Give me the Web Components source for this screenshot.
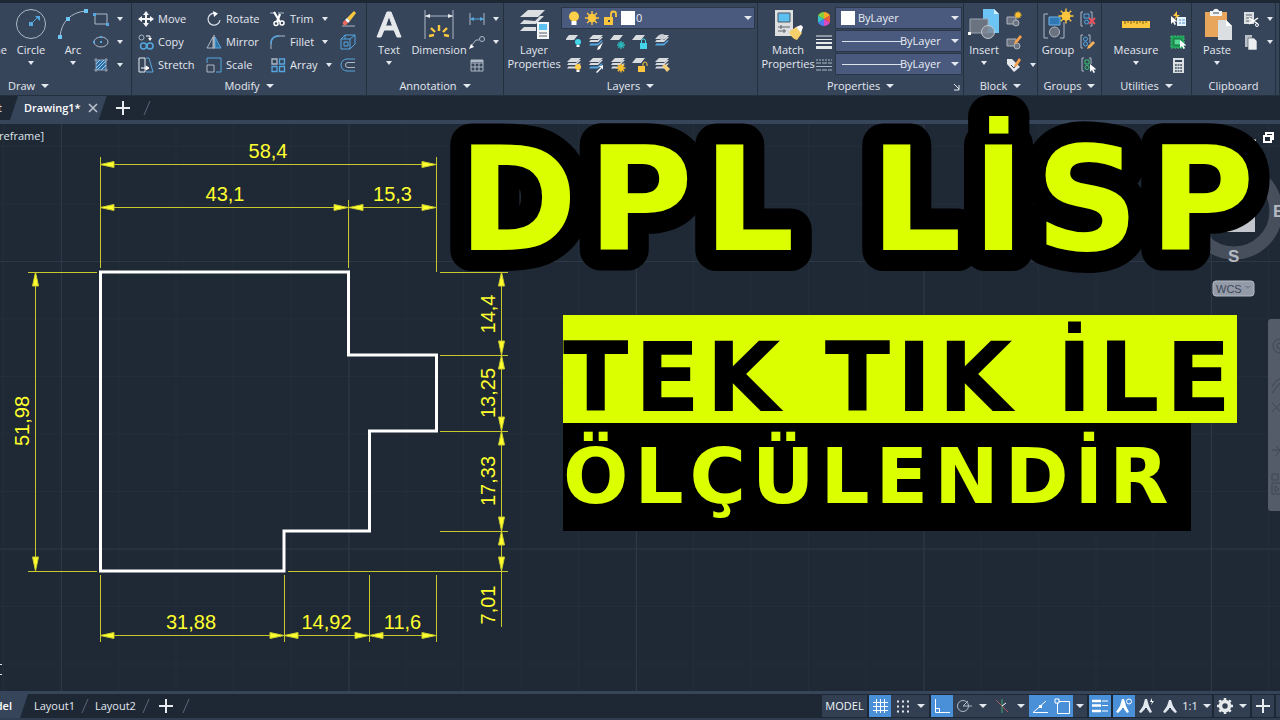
<!DOCTYPE html>
<html lang="tr">
<head>
<meta charset="utf-8">
<title>DPL LİSP</title>
<style>
html, body { height: 100%; margin: 0; }
body { background: #1f2935; color: #e3e8ef; font: 11px/14px "Open Sans", "Noto Sans", sans-serif; overflow: hidden; }
</style>
</head>
<body>
<cad-app></cad-app>
<script>
const SHEET = (x, y, f = '#d9dcdf') => `<path d="M${x + 4} ${y}h9l-4 5h-9z" fill="${f}"/>`;
const STACK = (c = '#d9dcdf') => `<path d="M5 1h10l-4 4H1z" fill="#d9dcdf"/><path d="M3 5.500l-2 2.500h9l5-5h-2l-3 3H3z" fill="#d9dcdf"/><path d="M3 9l-2 2.500h9l5-5h-2l-3 3H3z" fill="${c}"/>`;
const BULB = (x, y, f) => `<circle cx="${x}" cy="${y}" r="3" fill="${f}"/><path d="M${x - 1.5} ${y + 3}h3v2h-3z" fill="#fff"/>`;
const RAYS = (x, y, r, c = '#fbc02d') => `<path d="M${x - r} ${y}h${2 * r}M${x} ${y - r}v${2 * r}M${x - r * .7} ${y - r * .7}l${r * 1.4} ${r * 1.4}M${x + r * .7} ${y - r * .7}l${-r * 1.4} ${r * 1.4}" stroke="${c}" stroke-width="1.4"/><circle cx="${x}" cy="${y}" r="${r * .6}" fill="${c}"/>`;
const CURSOR = (x, y) => `<path d="M${x} ${y}v8l2-2 1.500 3 1.500-.8-1.500-2.800h3z" fill="#fff"/>`;
const L = '#aeb9c7', B = '#55a7e0';

/* name: [viewBox width, viewBox height, markup] */
const ICONS = {
  circle: [32, 32, `<circle cx="16" cy="16" r="14.500" fill="none" stroke="${L}"/><path d="M16 16l8-8" stroke="${B}"/><path d="M20 8h5v5z" fill="${B}"/><path d="M14 14h4v4h-4z" fill="${B}"/>`],
  arc: [32, 32, `<path d="M3 29C4 14 14 4 29 3" fill="none" stroke="${L}"/><path d="M1 27h4v4H1zM27 1h4v4h-4zM9 9h4v4H9z" fill="#6cc5f5"/>`],
  polyline: [32, 32, `<path d="M2 28V8h16a10 10 0 010 20" fill="none" stroke="${L}"/>`],
  rect: [16, 16, `<path d="M2 3h12v10H2z" fill="none" stroke="${L}"/><path d="M0 2h3v3H0zM13 12h3v3h-3z" fill="${B}"/>`],
  ellipse: [16, 16, `<ellipse cx="8" cy="8" rx="7" ry="5" fill="none" stroke="${L}"/><path d="M7 7h2v2H7zM7 2h2v2H7zM0 7h2v2H0z" fill="${B}"/>`],
  hatch: [16, 16, `<path d="M3 3h10v10H3z" fill="#2e6a9e"/><path d="M3 7l4-4M3 11l8-8M4 13l9-9M8 13l5-5" stroke="#8fd0fa"/><path d="M1 3h14M1 13h14M3 1v14M13 1v14" stroke="${L}" stroke-width=".8"/>`],
  move: [16, 16, `<path d="M8 0l3 4H9v3h3V5l4 3-4 3V9H9v3h2l-3 4-3-4h2V9H4v2L0 8l4-3v2h3V4H5z" fill="#f4f6f8"/>`],
  copy: [16, 16, `<g fill="none"><circle cx="3.500" cy="3.500" r="2.500" stroke="${L}"/><path d="M8 2h4v3" stroke="#fff"/><circle cx="5.500" cy="12" r="3" stroke="${B}" stroke-width="1.500"/><circle cx="12" cy="12" r="3" stroke="${B}" stroke-width="1.500"/></g><path d="M10 4h4l-2 3z" fill="#fff"/>`],
  stretch: [16, 16, `<path d="M1 1h6v14H1z" fill="none" stroke="#e8edf2"/><path d="M8 1h3l4 14H8" fill="none" stroke="${B}"/><path d="M3 11h6M8 9l3 2-3 2z" stroke="#fff" fill="#fff"/>`],
  rotate: [16, 16, `<path d="M10 2.500A6 6 0 1014 9" fill="none" stroke="#dce2e9" stroke-width="1.200"/><path d="M7 0l5 2.500L8 6z" fill="#fff"/>`],
  mirror: [16, 16, `<path d="M7 3v11H1z" fill="none" stroke="${L}"/><path d="M9 3v11h6z" fill="#3276a8" stroke="${B}"/><path d="M8 1v14" stroke="#fff" stroke-width=".8"/>`],
  scale: [16, 16, `<path d="M1 6V1h14v14h-5" fill="none" stroke="${B}"/><path d="M1 8h7v7H1z" fill="none" stroke="${L}"/>`],
  trim: [16, 16, `<path d="M0 2h16" stroke="${L}" stroke-dasharray="6 2"/><path d="M4 1l6 10M10 3L7 11" stroke="#fff" stroke-width="2.200"/><circle cx="6" cy="12.500" r="2" fill="none" stroke="#fff" stroke-width="1.500"/><circle cx="12" cy="12" r="2" fill="none" stroke="#fff" stroke-width="1.500"/>`],
  fillet: [16, 16, `<path d="M1 15V9C1 4 4 2 9 2h6" fill="none" stroke="${L}"/><path d="M1 10C1 5 4 2 9 2" fill="none" stroke="${B}" stroke-width="1.500"/>`],
  array: [16, 16, `<g fill="none" stroke-width="1.300"><path d="M2 2h5v5H2z" stroke="${L}"/><path d="M9.500 2h5v5h-5zM2 9.500h5v5H2zM9.500 9.500h5v5h-5z" stroke="${B}"/></g>`],
  erase: [16, 16, `<path d="M2 15h13" stroke="${L}"/><path d="M14 0l2 2-6 8-3-3z" fill="#fbc840"/><path d="M7 7l3 3-2 2-3-3z" fill="#fff"/><path d="M5 9l3 3-2 2c-2 1-4-1-3-3z" fill="#ee6a60"/>`],
  explode: [16, 16, `<path d="M1 5h9v10H1zM1 5l4-4h10v9l-5 5M10 5l5-4M5 1v4M4 8h4v4H4z" fill="none" stroke="${B}"/>`],
  offset: [16, 16, `<path d="M15 2H7a6 6 0 000 12h8" fill="none" stroke="${B}"/><path d="M15 5.500H8a2.500 2.500 0 000 5h7" fill="none" stroke="${L}"/>`],
  text: [32, 32, `<path d="M4 29L14 4h4l10 25h-4l-3-7h-10l-3 7zM12.500 18h7L16 8z" fill="#e6e9ec" stroke="#e6e9ec"/>`],
  dimension: [32, 32, `<path d="M2 2v29M30 2v29M2 8h28" stroke="${L}"/><path d="M2 8l5-2v4zM30 8l-5-2v4z" fill="#e8edf2"/><path d="M6 28l5-1M8 20l4 4M16 17v6M24 20l-4 4M26 28l-5-1" stroke="#fbc840" stroke-width="2.400"/>`],
  linear: [16, 16, `<path d="M1 2v12M15 2v12" stroke="${L}"/><path d="M1 8h14" stroke="${B}"/><path d="M1 8l4-2v4zM15 8l-4-2v4z" fill="${B}"/>`],
  leader: [16, 16, `<circle cx="13" cy="5" r="2.500" fill="none" stroke="${L}"/><path d="M10 6H7l-5 6" fill="none" stroke="${L}"/><path d="M0 15l2-5 3 3z" fill="#fff"/>`],
  table: [16, 16, `<path d="M2 3h12v11H2zM2 6h12M2 10h12M6 6v8M10 6v8" fill="none" stroke="${L}"/><path d="M2 3h12v2H2z" fill="${L}"/>`],
  layerprops: [32, 32, `<path d="M10 2h17l-7 7H2zM6 12l-4 4h16l8-8h-4l-5 5zM6 19l-4 4h16V19z" fill="#dcdfe2"/><path d="M19 14h12v17H19z" fill="#f3f5f6"/><path d="M21 16h8v6h-8z" fill="#5cc0f0"/><path d="M21 25h8M21 28h8" stroke="#59616c"/>`],
  bulb: [16, 16, `<circle cx="8" cy="6.500" r="5" fill="#fdcf4a"/><path d="M5.500 11h5v4h-5z" fill="#fff"/>`],
  sun: [16, 16, RAYS(8, 8, 7, '#fdc63e')],
  lock: [16, 16, `<path d="M2 7h9v8H2z" fill="#fdc63e"/><path d="M9 7V4a2.500 2.500 0 015 0v3" fill="none" stroke="#fdc63e" stroke-width="1.800"/><path d="M6 10h2v2H6z" fill="#37455b"/>`],
  swatch: [16, 16, `<path d="M1 1h14v14H1z" fill="#fff"/>`],
  loff: [16, 16, SHEET(-1, 1) + BULB(12, 8, '#45d5e8')],
  liso: [16, 16, STACK(B) + `<path d="M15 8l-5 5-1 3 3-1z" fill="#fff"/>`],
  lfreeze: [16, 16, SHEET(0, 1) + RAYS(11, 11, 4, '#2bb5b8')],
  llock: [16, 16, SHEET(0, 1) + `<path d="M8 9h7v6H8z" fill="#45d5e8"/><path d="M9.500 9V7a2 2 0 014 0v2" fill="none" stroke="#45d5e8"/>`],
  lcur: [16, 16, STACK(B) + `<circle cx="8" cy="3" r="3" fill="#c8cdd4"/>`],
  lon: [16, 16, STACK() + BULB(12, 10, '#fdcf4a')],
  luniso: [16, 16, STACK(B) + `<path d="M8 15l5-5h-3l5-2v5l-1-2-5 5z" fill="#fff"/>`],
  lthaw: [16, 16, STACK() + RAYS(11, 11, 4.5)],
  lunlock: [16, 16, SHEET(0, 1) + `<path d="M6 9h7v6H6z" fill="#fdc63e"/><path d="M11 9V7a2 2 0 014 0v2" fill="none" stroke="#fdc63e"/>`],
  lmatch: [16, 16, STACK() + `<path d="M8 9l3-2 5 5-3 3z" fill="#f4cf7a"/>`],
  match: [32, 32, `<path d="M3 2h18v26H3z" fill="#dcdee0"/><path d="M6 5h12v9H6z" fill="#5cc0f0" stroke="#4c5665"/><path d="M6 19h12M6 23h8M9 17v4M12 21v4" stroke="#59616c"/><path d="M17 24l7-5 6 6-5 7c-4-1-6-4-8-8z" fill="#f7d06b"/><path d="M24 19l5-2 2 2-2 6z" fill="#fff"/>`],
  wheel: [16, 16, `<path d="M8 8V1a7 7 0 016 3.500z" fill="#f9a825"/><path d="M8 8l6-3.500v7z" fill="#f05a3c"/><path d="M8 8l6 3.500A7 7 0 018 15z" fill="#d94ac0"/><path d="M8 8v7a7 7 0 01-6-3.500z" fill="#4f7df0"/><path d="M8 8l-6 3.500v-7z" fill="#35c4c8"/><path d="M8 8L2 4.500A7 7 0 018 1z" fill="#8bd03c"/>`],
  weights: [16, 16, `<path d="M0 2h16M0 5.500h16" stroke="#e6e9ec"/><path d="M0 9h16" stroke="#e6e9ec" stroke-width="2"/><path d="M0 13.500h16" stroke="#e6e9ec" stroke-width="3"/>`],
  linetype: [16, 16, `<path d="M0 3h16" stroke="${L}" stroke-dasharray="2 1"/><path d="M0 6h16M0 13h16" stroke="${L}" stroke-dasharray="5 1"/><path d="M0 9.500h16" stroke="${L}"/>`],
  insert: [32, 32, `<path d="M15 1h11l5 5v19H15z" fill="#6cc5f5"/><path d="M26 1v5h5z" fill="#d5effc"/><path d="M2 11h18v14H2z" fill="#6b7280" stroke="#9ba4b0"/><circle cx="20" cy="24" r="6.500" fill="#7f8895" fill-opacity=".8" stroke="#c3c9d1"/><path d="M0 24h3v3H0z" fill="#fff"/>`],
  bcreate: [16, 16, `<path d="M1 6h9v7H1z" fill="#6b7280" stroke="#aeb5bf"/><circle cx="10" cy="12" r="3" fill="#6b7280" stroke="#aeb5bf"/>` + RAYS(12, 4, 3.5)],
  bedit: [16, 16, `<path d="M1 5h9v7H1z" fill="#6b7280" stroke="#aeb5bf"/><circle cx="11" cy="12" r="3" fill="#6b7280" stroke="#aeb5bf"/><path d="M14 1l2 2-5 6-3 1 1-3z" fill="#f6a04a"/>`],
  battr: [16, 16, `<path d="M1 2h5l8 8-6 5-7-8z" fill="#e6e9ec"/><path d="M5 8l3 3 3-4" stroke="#37455b" fill="none"/><path d="M13 1l2 2-4 6-3 1 1-3z" fill="#f6a04a"/>`],
  group: [32, 32, `<path d="M6 6H2v24h4M18 30h4V14" fill="none" stroke="${L}"/><path d="M7 9h11v8H7z" fill="#2f77b5" stroke="#6fb4e6"/><circle cx="12.500" cy="24" r="5" fill="#6b7280" stroke="#b1b8c2"/>` + RAYS(24, 8, 7.5, '#fdc63e')],
  ungroup: [16, 16, `<path d="M3 1H1v14h2M10 1h2v14h-2" fill="none" stroke="${L}"/><path d="M4 3h5v4H4z" fill="none" stroke="${B}"/><circle cx="6.500" cy="11" r="2" fill="none" stroke="${B}"/><path d="M9 7l6 6M15 7l-6 6" stroke="#f04f5a" stroke-width="1.800"/>`],
  gedit: [16, 16, `<path d="M3 1H1v13h2M8 1h2v8" fill="none" stroke="${L}"/><circle cx="5.500" cy="5" r="2" fill="none" stroke="${B}"/><circle cx="5.500" cy="10" r="2" fill="none" stroke="${B}"/><path d="M13 7l2 2-5 5-3 1 1-3z" fill="#f6b35a"/>`],
  gsel: [16, 16, `<path d="M4 1H2v13h2M9 1h2v6" fill="none" stroke="${L}"/><path d="M5 3h4v4H5z" fill="none" stroke="#35c46c"/><circle cx="7" cy="10.500" r="2" fill="none" stroke="#35c46c"/>` + CURSOR(10, 7)],
  measure: [32, 32, `<path d="M2 13h28v7H2z" fill="#fbc840"/><path d="M5 13v3M8 13v2M11 13v3M14 13v2M17 13v3M20 13v2M23 13v3M26 13v2" stroke="#7a5b12"/>`],
  qselect: [16, 16, `<path d="M7 6h9v9H7z" fill="#e9f3fb"/><path d="M9 9h2M12 9h3M9 12h2M12 12h3" stroke="#4a90d9"/><path d="M7 0L3 5h3L4 9l6-5H7z" fill="#fdc63e"/>` + CURSOR(1, 5)],
  selall: [16, 16, `<path d="M1 2h13v12H1z" fill="#1f9d58" stroke="#35c46c" stroke-dasharray="2 1"/><path d="M4 5h7v6H4z" fill="#54d893" stroke="#176e3e"/>` + CURSOR(10, 6)],
  calc: [16, 16, `<path d="M3 1h11v15H3z" fill="#dcdfe2"/><path d="M5 3h7v2H5z" fill="#37455b"/><path d="M5 8h7M5 11h7M5 14h7" stroke="#37455b" stroke-width="1.500" stroke-dasharray="1.800 .8"/>`],
  paste: [32, 32, `<path d="M4 4h22v25H4z" fill="#e8a55c"/><path d="M9 3h3c1-3 5-3 6 0h3v5H9z" fill="#f1f3f4"/><path d="M12 5h6" stroke="#37455b"/><path d="M17 12h8l6 6v14H17z" fill="#dcdfe2"/><path d="M25 12v6h6z" fill="#fff"/>`],
  cut: [16, 16, `<path d="M1 1h10v12H1z" fill="#dcdfe2"/><path d="M3 4h6M3 7h6M3 10h3" stroke="#59616c"/><path d="M6 7l9 6M6 13l9-6" stroke="#fff" stroke-width="1.500"/><circle cx="14" cy="14" r="1.500" fill="none" stroke="#fff"/>`],
  copyclip: [16, 16, `<path d="M2 1h7v12H2z" fill="#b9bfc7"/><path d="M5 4h6l3 3v9H5z" fill="#eceef0" stroke="#37455b" stroke-width=".6"/>`],
  plus: [16, 16, `<path d="M1 8h14M8 1v14" stroke="#e8ecf0" stroke-width="2"/>`],
  close: [16, 16, `<path d="M4 4l8 8M12 4l-8 8" stroke="#b9c1cc" stroke-width="1.600"/>`],
  slash: [8, 16, `<path d="M1 15L7 1" stroke="#5a6678"/>`],
  launch: [8, 8, `<path d="M1 1l5 5M6 2v5H1" stroke="#e3e8ef" fill="none"/>`],
  grid: [16, 16, `<path d="M4.500 1v14M8.500 1v14M12.500 1v14M1 4.500h15M1 8.500h15M1 12.500h15" stroke="#fff"/>`],
  snap: [16, 16, `<path d="M3 3.500h12M3 8.500h12M3 13.500h12" stroke="#e3e8ef" stroke-width="2" stroke-dasharray="2 3"/>`],
  ortho: [16, 16, `<path d="M1.500 1v13.500H16M1.500 10.500h4v4" fill="none" stroke="#fff"/>`],
  polar: [16, 16, `<circle cx="7" cy="8" r="5.500" fill="none" stroke="${L}"/><path d="M7 8h9M7 8l5-5" stroke="${L}"/>`],
  iso: [16, 16, `<path d="M8 1v14" stroke="#3fa46a"/><path d="M2 2l12 12" stroke="#a15a66"/><path d="M8 8l4-3" stroke="#fff"/>`],
  otrack: [16, 16, `<path d="M16 14.500H1L14 3" fill="none" stroke="#fff"/><path d="M7 7h3v3H7z" fill="#fff"/>`],
  osnap: [16, 16, `<path d="M3.500 3.500h12v12h-12z" fill="none" stroke="#fff"/><path d="M1 1h4v4H1z" fill="#4a90d9" stroke="#fff"/>`],
  lweight: [16, 16, `<path d="M0 3h9M0 7.500h9M0 13h9" stroke="#fff" stroke-width="2.500"/><path d="M10 3h6M10 7.500h6M10 13h6" stroke="#fff"/>`],
  ann1: [16, 16, `<path d="M6 1h2l2 7 3 6-2 1-3-4v-1H6v1l-4 4-2-1 4-6z" fill="#fff"/><circle cx="13" cy="3.500" r="2.500" fill="none" stroke="#fff"/>`],
  ann2: [16, 16, `<path d="M6 1h2l2 7 3 6-2 1-3-4v-1H6v1l-4 4-2-1 4-6z" fill="#e3e8ef"/><path d="M13 0l-2 4h2l-1 3 3-4h-2z" fill="#fff"/>`],
  ann3: [16, 16, `<path d="M7 2h2l2 6 4 6-2 1-4-4v-1H7v1l-4 4-2-1 4-6z" fill="#e3e8ef"/>`],
  gear: [16, 16, `<circle cx="8" cy="8" r="4.500" fill="none" stroke="#e6e9ec" stroke-width="3.600"/><path d="M8 0v3M8 13v3M0 8h3M13 8h3M2.300 2.300l2.200 2.200M11.500 11.500l2.200 2.200M2.300 13.700l2.200-2.200M11.500 4.500l2.200-2.200" stroke="#e6e9ec" stroke-width="2.600"/>`]
};

/* Shared helper: each component is a class with its own open shadow root. */
function define(name, build) {
  customElements.define(name, class extends HTMLElement {
    constructor() {
      super();
      this.attachShadow({ mode: 'open' });
    }
    connectedCallback() {
      if (!this.shadowRoot.childNodes.length) this.shadowRoot.innerHTML = build(this);
    }
  });
}

define('cad-icon', el => {
  const [w, h, art] = ICONS[el.getAttribute('name')];
  return `<style>:host{display:inline-flex;flex:none}svg{display:block}</style>
  <svg width="${w}" height="${h}" viewBox="0 0 ${w} ${h}" aria-hidden="true">${art}</svg>`;
});

define('cad-caret', () => `<style>:host{display:block;flex:none;width:0;height:0;border:3px solid transparent;border-top:4px solid #e3e8ef;border-bottom:0}
:host([wide]){border-left-width:4px;border-right-width:4px}</style>`);

/* One command of the ribbon; attribute "large" puts the label under the icon. */
define('tool-button', el => {
  const caret = el.hasAttribute('menu') ? '<cad-caret></cad-caret>' : '';
  return `<style>
  :host{display:block}
  button{display:flex;align-items:center;gap:4px;height:23px;width:100%;padding:0;border:0;background:none;color:inherit;font:inherit;white-space:nowrap}
  :host([large]) button{flex-direction:column;height:70px;gap:3px;padding-top:1px}
  :host([large]) cad-caret{margin-top:1px}
  :host([large]) span{text-align:center}
  cad-caret{margin-left:4px}
  :host([large]) cad-caret{margin-left:0}
  </style><button type="button" aria-label="${el.getAttribute('label') || el.textContent}"><cad-icon name="${el.getAttribute('icon')}"></cad-icon>${el.textContent ? '<span><slot></slot></span>' : ''}${caret}</button>`;
});

define('ribbon-panel', el => `<style>
  :host{display:flex;flex-direction:column;min-width:0;box-sizing:border-box;border-right:1px solid #25303f;background:#37455b}
  .body{display:flex;box-sizing:border-box;height:74px;padding-top:4px}
  footer{display:grid;grid-template-columns:1fr auto 1fr;align-items:center;height:18px}
  .title{grid-column:2;display:flex;align-items:center;gap:6px;padding:0;border:0;background:none;color:inherit;font:inherit}
  .launch{justify-self:end;padding:0 2px 0 0;border:0;background:none}
  </style><div class="body"><slot></slot></div>
  <footer><button class="title" type="button"><span>${el.getAttribute('heading')}</span>${el.hasAttribute('plain') ? '' : '<cad-caret wide></cad-caret>'}</button>${el.hasAttribute('launcher') ? '<button class="launch" type="button" aria-label="Options"><cad-icon name="launch"></cad-icon></button>' : ''}</footer>`);

define('drop-list', el => `<style>
  :host{display:grid;grid-template-columns:1fr;align-items:center;height:20px;margin:1px 0 2px;background:#4a5a7f;box-shadow:0 0 0 1px #2b3748}
  select,.lead,cad-caret{grid-area:1/1}
  select{appearance:none;width:100%;height:20px;margin:0;border:0;background:none;color:#e8edf3;font:11px/16px "Open Sans",sans-serif;padding:0 10px 0 ${el.getAttribute('indent')}px}
  .lead{display:flex;gap:2px;align-items:center;padding-left:4px;pointer-events:none}
  cad-caret{justify-self:end;margin-right:2px;pointer-events:none}
  i{display:block;width:60px;height:1px;margin-left:2px;background:#dce2ea}
  </style><select aria-label="${el.getAttribute('label')}"><option>${el.getAttribute('value')}</option></select>
  <span class="lead">${el.hasAttribute('line') ? '<i></i>' : el.getAttribute('icons').split(' ').map(n => `<cad-icon name="${n}"></cad-icon>`).join('')}</span><cad-caret wide></cad-caret>`);

const tool = (icon, label, menu) => `<tool-button icon="${icon}" label="${label}"${menu ? ' menu' : ''}></tool-button>`;

define('cad-ribbon', () => `<style>
  :host{display:grid;grid-template-columns:206fr 235fr 137fr 254fr 206fr 74fr 64fr 90fr 84fr 4fr;margin-left:-74px;border-top:3px solid #1e2835;border-bottom:1px solid #25303f}
  .col{display:flex;flex-direction:column}
  .end{margin-left:auto}
  .gap{padding-left:2px}
  .w38{width:38px}.w40{width:40px}.w44{width:44px}.w56{width:56px}.w64{width:64px}.w68{width:68px}
  .grow{flex:1;min-width:0}
  .icons{display:grid;grid-template-columns:repeat(5,22px);padding-left:4px}
  .glyph{display:flex;align-items:center;height:23px;width:20px}
  </style>
  <ribbon-panel heading="Draw">
    <tool-button large icon="polyline" class="w44 end">Polyline</tool-button>
    <tool-button large menu icon="circle" class="w44">Circle</tool-button>
    <tool-button large menu icon="arc" class="w40">Arc</tool-button>
    <div class="col w38">${tool('rect', 'Rectangle', 1)}${tool('ellipse', 'Ellipse', 1)}${tool('hatch', 'Hatch', 1)}</div>
  </ribbon-panel>
  <ribbon-panel heading="Modify">
    <div class="col w68" style="margin-left:6px"><tool-button icon="move">Move</tool-button><tool-button icon="copy">Copy</tool-button><tool-button icon="stretch">Stretch</tool-button></div>
    <div class="col w64"><tool-button icon="rotate">Rotate</tool-button><tool-button icon="mirror">Mirror</tool-button><tool-button icon="scale">Scale</tool-button></div>
    <div class="col grow"><tool-button icon="trim" menu>Trim</tool-button><tool-button icon="fillet" menu>Fillet</tool-button><tool-button icon="array" menu>Array</tool-button></div>
    <div class="col" style="width:26px">${tool('erase', 'Erase')}${tool('explode', 'Explode')}${tool('offset', 'Offset')}</div>
  </ribbon-panel>
  <ribbon-panel heading="Annotation">
    <tool-button large menu icon="text" class="w44">Text</tool-button>
    <tool-button large icon="dimension" class="w56">Dimension</tool-button>
    <div class="col end" style="width:34px">${tool('linear', 'Linear', 1)}${tool('leader', 'Leader', 1)}${tool('table', 'Table')}</div>
  </ribbon-panel>
  <ribbon-panel heading="Layers">
    <tool-button large icon="layerprops" class="w56 gap">Layer<br>Properties</tool-button>
    <div class="col grow" style="padding:0 3px 0 0">
      <drop-list label="Layer" value="0" indent="74" icons="bulb sun lock swatch"></drop-list>
      <div class="icons">${['loff', 'liso', 'lfreeze', 'llock', 'lcur', 'lon', 'luniso', 'lthaw', 'lunlock', 'lmatch'].map(n => tool(n, 'Layer ' + n.slice(1))).join('')}</div>
    </div>
  </ribbon-panel>
  <ribbon-panel heading="Properties" launcher>
    <tool-button large icon="match" class="w56 gap">Match<br>Properties</tool-button>
    <div class="col"><span class="glyph"><cad-icon name="wheel"></cad-icon></span><span class="glyph"><cad-icon name="weights"></cad-icon></span><span class="glyph"><cad-icon name="linetype"></cad-icon></span></div>
    <div class="col grow" style="padding-right:2px">
      <drop-list label="Colour" value="ByLayer" indent="22" icons="swatch"></drop-list>
      <drop-list label="Lineweight" value="ByLayer" indent="64" line></drop-list>
      <drop-list label="Linetype" value="ByLayer" indent="64" line></drop-list>
    </div>
  </ribbon-panel>
  <ribbon-panel heading="Block">
    <tool-button large menu icon="insert" class="w40">Insert</tool-button>
    <div class="col gap">${tool('bcreate', 'Create')}${tool('bedit', 'Edit')}${tool('battr', 'Attributes', 1)}</div>
  </ribbon-panel>
  <ribbon-panel heading="Groups">
    <tool-button large icon="group" class="w40">Group</tool-button>
    <div class="col gap">${tool('ungroup', 'Ungroup')}${tool('gedit', 'Group edit')}${tool('gsel', 'Group selection')}</div>
  </ribbon-panel>
  <ribbon-panel heading="Utilities">
    <tool-button large menu icon="measure" class="w68">Measure</tool-button>
    <div class="col">${tool('qselect', 'Quick select')}${tool('selall', 'Select all')}${tool('calc', 'Calculator')}</div>
  </ribbon-panel>
  <ribbon-panel heading="Clipboard" plain>
    <tool-button large menu icon="paste" class="w44" style="margin-left:3px">Paste</tool-button>
    <div class="col end" style="width:32px">${tool('cut', 'Cut', 1)}${tool('copyclip', 'Copy clip', 1)}</div>
  </ribbon-panel>
  <ribbon-panel heading="" plain></ribbon-panel>`);

define('file-tabs', () => `<style>
  :host{display:flex;align-items:center;height:24px;background:#1e2835;border-bottom:4px solid #37455b}
  button{display:flex;align-items:center;height:24px;border:0;padding:0;background:none;color:inherit;font:inherit}
  .start{width:10px;justify-content:flex-end;padding-right:8px}
  .active{gap:4px;padding:0 6px 0 14px;background:#37455b;clip-path:polygon(8px 0,100% 0,calc(100% - 8px) 100%,0 100%);color:#fff;font-weight:600}
  .add{margin:0 12px 0 8px}
  </style><button class="start" type="button">Start</button><button class="active" type="button"><span>Drawing1*</span><cad-icon name="close"></cad-icon></button>
  <button class="add" type="button" aria-label="New drawing"><cad-icon name="plus"></cad-icon></button><cad-icon name="slash"></cad-icon>`);

/* Filled arrowhead of a dimension line, pointing against (dx, dy). */
const arrow = (x, y, dx, dy) => `<path d="M${x} ${y}l${dx * 14 - dy * 3} ${dy * 14 - dx * 3}l${dy * 6} ${dx * 6}z" fill="#ffff2e"/>`;
const hdim = (x1, x2, y, label, tx) => `<path d="M${x1} ${y + .5}H${x2}"/>${arrow(x1, y + .5, 1, 0)}${arrow(x2, y + .5, -1, 0)}<text x="${tx || (x1 + x2) / 2}" y="${y - 6}">${label}</text>`;
const vdim = (y1, y2, x, label, ty, base) => `<path d="M${x + .5} ${y1}V${y2}"/>${arrow(x + .5, y1, 0, 1)}${arrow(x + .5, y2, 0, -1)}<text transform="translate(${base} ${ty}) rotate(-90)">${label}</text>`;
const lines = (from, step, n, vertical) => Array.from({ length: n }, (_, i) => {
  const p = from + i * step;
  return vertical ? `M${p} 0V2000` : `M0 ${p}H4000`;
}).join('');

define('drawing-canvas', () => `<style>
  :host{display:block;position:relative;min-height:0;overflow:hidden;background:#1f2935}
  svg.sheet{display:block;width:100%;height:100%}
  text{font:20px "Liberation Sans",Arial,sans-serif;fill:#ffff2e;stroke:none;text-anchor:middle}
  .view{position:absolute;top:5px;right:calc(100% - 44px);padding:0;border:0;background:none;color:#dfe5ec;font:inherit;white-space:nowrap}
  view-cube{position:absolute;right:0;top:0}
  nav-strip{position:absolute;right:0;top:195px}
  </style>
  <svg class="sheet" role="img" aria-label="Drawing"><g transform="translate(0 -124)">
    <g fill="none"><path d="${lines(3.5, 57.5, 60, true)}${lines(146.5, 57.5, 30)}" stroke="#232e3b"/>
    <path d="${lines(61.5, 287.5, 12, true)}${lines(261.5, 287.5, 6)}" stroke="#2c3847"/></g>
    <g fill="none" stroke="#c9c92e">
      <path d="M100.500 157V268M436.500 157V272M348.500 200V268M28 272.500H97M28 571.500H97M440 272.500H508M440 355.500H508M440 431.500H508M440 531.500H508M288 571.500H508M501.500 571V627M100.500 575V642M284.500 575V642M369.500 575V642M436.500 575V642"/>
      ${hdim(100, 436, 164, '58,4')}${hdim(100, 348, 207, '43,1', 225)}${hdim(349, 436, 207, '15,3')}
      ${hdim(100, 284, 635, '31,88', 191)}${hdim(284, 369, 635, '14,92')}${hdim(369, 436, 635, '11,6')}
      ${vdim(272, 571, 35, '51,98', 421, 29)}${vdim(272, 355, 501, '14,4', 314, 495)}${vdim(355, 431, 501, '13,25', 393, 495)}${vdim(431, 531, 501, '17,33', 481, 495)}${vdim(531, 571, 501, '7,01', 605, 495)}
    </g>
    <path d="M100.500 272H348.500V355H436.500V431H369.500V531H284V571H100.500z" fill="none" stroke="#fff" stroke-width="3"/>
    <path d="M0 664.500h2M0 674.500h2" stroke="#dfe5ec"/>
  </g></svg>
  <button class="view" type="button">[2D Wireframe]</button><view-cube></view-cube><nav-strip></nav-strip>`);

define('view-cube', () => `<style>
  :host{display:block;width:100px;height:176px}
  text{font:bold 17px "Liberation Sans",sans-serif;fill:#b5bac2}
  .wcs{font-weight:400;font-size:11px;fill:#3d4757}
  </style><svg width="100" height="176" role="img" aria-label="View cube">
  <circle cx="54" cy="87" r="42" fill="none" stroke="#474f5d" stroke-width="13"/><path d="M40 75h35v33H40z" fill="#c3c7cd"/>
  <text x="48" y="138">S</text><text x="93" y="93">E</text>
  <rect x="33" y="157" width="41" height="15" rx="3" fill="#949ba8" stroke="#b4bac4"/><text class="wcs" x="36" y="169">WCS</text><path d="M64 162h7l-3 3z" fill="#7d8594"/>
  <path d="M70 16.500h6" stroke="#fff" stroke-width="2"/><path d="M84 12h7v6h-7zM86 12V9h7v6h-2" fill="none" stroke="#fff" stroke-width="2"/></svg>`);

define('nav-strip', () => `<style>:host{display:block;width:12px;height:192px;border-radius:3px 0 0 3px;background:#535c68;overflow:hidden}svg{display:block}</style>
  <svg width="12" height="192" aria-hidden="true"><g fill="none" stroke="#3e4855"><circle cx="12" cy="27" r="7"/><circle cx="12" cy="27" r="3"/><path d="M4 74l8-10M4 68l4-6 5-3M4 84l8 8M4 93l8-8M4 131h8l-4-4M8 137l4-6M4 155h6v6H4zM4 164h9v11H4zM7 167l4 3-4 3z"/></g></svg>`);

define('status-bar', () => {
  const cell = (icon, w, on) => `<button type="button" aria-label="${icon}" class="${on ? 'on' : ''}" style="width:${w}px"><cad-icon name="${icon}"></cad-icon></button>`;
  const menu = w => `<button type="button" aria-label="Options" style="width:${w}px"><cad-caret wide></cad-caret></button>`;
  return `<style>
  :host{display:flex;align-items:center;height:24px;background:#1e2835;border-top:3px solid #37455b;border-bottom:2px solid #303d50}
  nav{display:flex;align-items:center;flex:1;height:100%}
  nav button{height:100%;padding:0 6px;border:0;background:none;color:inherit;font:inherit}
  .model{display:flex;justify-content:flex-end;align-items:center;width:28px;padding:0 16px 0 0;background:#37455b;clip-path:polygon(0 0,100% 0,calc(100% - 8px) 100%,0 100%);color:#fff;font-weight:600}
  nav .add{display:flex;align-items:center;padding:0 8px}
  .tools{display:flex;gap:2px;height:22px}
  .tools div{display:flex;background:#323f53}
  .tools button{display:flex;align-items:center;justify-content:center;height:22px;padding:0;border:0;background:none;color:#f1f4f7;font:11px/16px "Open Sans",sans-serif}
  .tools .on{background:#4a90d9}
  .tools .ratio{gap:5px}
  </style>
  <nav aria-label="Layouts"><button class="model" type="button">Model</button><button type="button">Layout1</button><cad-icon name="slash"></cad-icon><button type="button">Layout2</button><cad-icon name="slash"></cad-icon><button class="add" type="button" aria-label="New layout"><cad-icon name="plus"></cad-icon></button><cad-icon name="slash"></cad-icon></nav>
  <div class="tools">
  <div><button type="button" style="width:45px">MODEL</button></div>
  <div>${cell('grid', 22, 1)}${cell('snap', 22)}${menu(16)}</div>
  <div>${cell('ortho', 22, 1)}${cell('polar', 22)}${menu(16)}${cell('iso', 22)}${menu(16)}${cell('otrack', 22, 1)}${cell('osnap', 22, 1)}${menu(14)}</div>
  <div>${cell('lweight', 22, 1)}</div>
  <div>${cell('ann1', 22, 1)}${cell('ann2', 24)}${cell('ann3', 22)}<button type="button" class="ratio" style="width:31px"><span>1:1</span><cad-caret wide></cad-caret></button></div>
  <div>${cell('gear', 22)}${menu(14)}</div><div>${cell('plus', 22)}</div><div style="width:4px"></div>
  </div>`;
});

/* Headline block laid over the drawing. */
define('promo-title', () => `<style>
  :host{display:block;width:840px;pointer-events:none}
  h1,h2{margin:0;font-family:"DejaVu Sans",sans-serif;font-weight:700}
  h1{height:220px}
  svg{display:block;overflow:visible}
  text{font:bold 144px "DejaVu Sans",sans-serif;letter-spacing:10px;fill:#dcff00;stroke:#000;stroke-width:42px;stroke-linejoin:round;paint-order:stroke fill}
  h2{margin-left:123px}
  .one,.two{display:flex;justify-content:space-between;align-items:center;box-sizing:border-box;height:108px}
  .one{width:674px;padding-top:18px;background:#dcff00;color:#000;font-size:96px;line-height:96px;letter-spacing:6px}
  .two{width:628px;background:#000;color:#dcff00;font-size:77px;line-height:80px;letter-spacing:6px}
  </style><h1><svg width="840" height="220"><text x="18" y="155">DPL</text><text x="430" y="155">LİSP</text></svg></h1>
  <h2><span class="one"><span>TEK</span> <span>TIK</span> <span>İLE</span></span><span class="two">ÖLÇÜLENDİR</span></h2>`);

define('cad-app', () => `<style>
  :host{display:grid;grid-template-rows:auto auto minmax(0,1fr) auto;position:relative;height:100vh;overflow:hidden}
  promo-title{position:absolute;right:0;top:95px}
  </style><cad-ribbon></cad-ribbon><file-tabs></file-tabs><drawing-canvas></drawing-canvas><status-bar></status-bar><promo-title></promo-title>`);
</script>
</body>
</html>
